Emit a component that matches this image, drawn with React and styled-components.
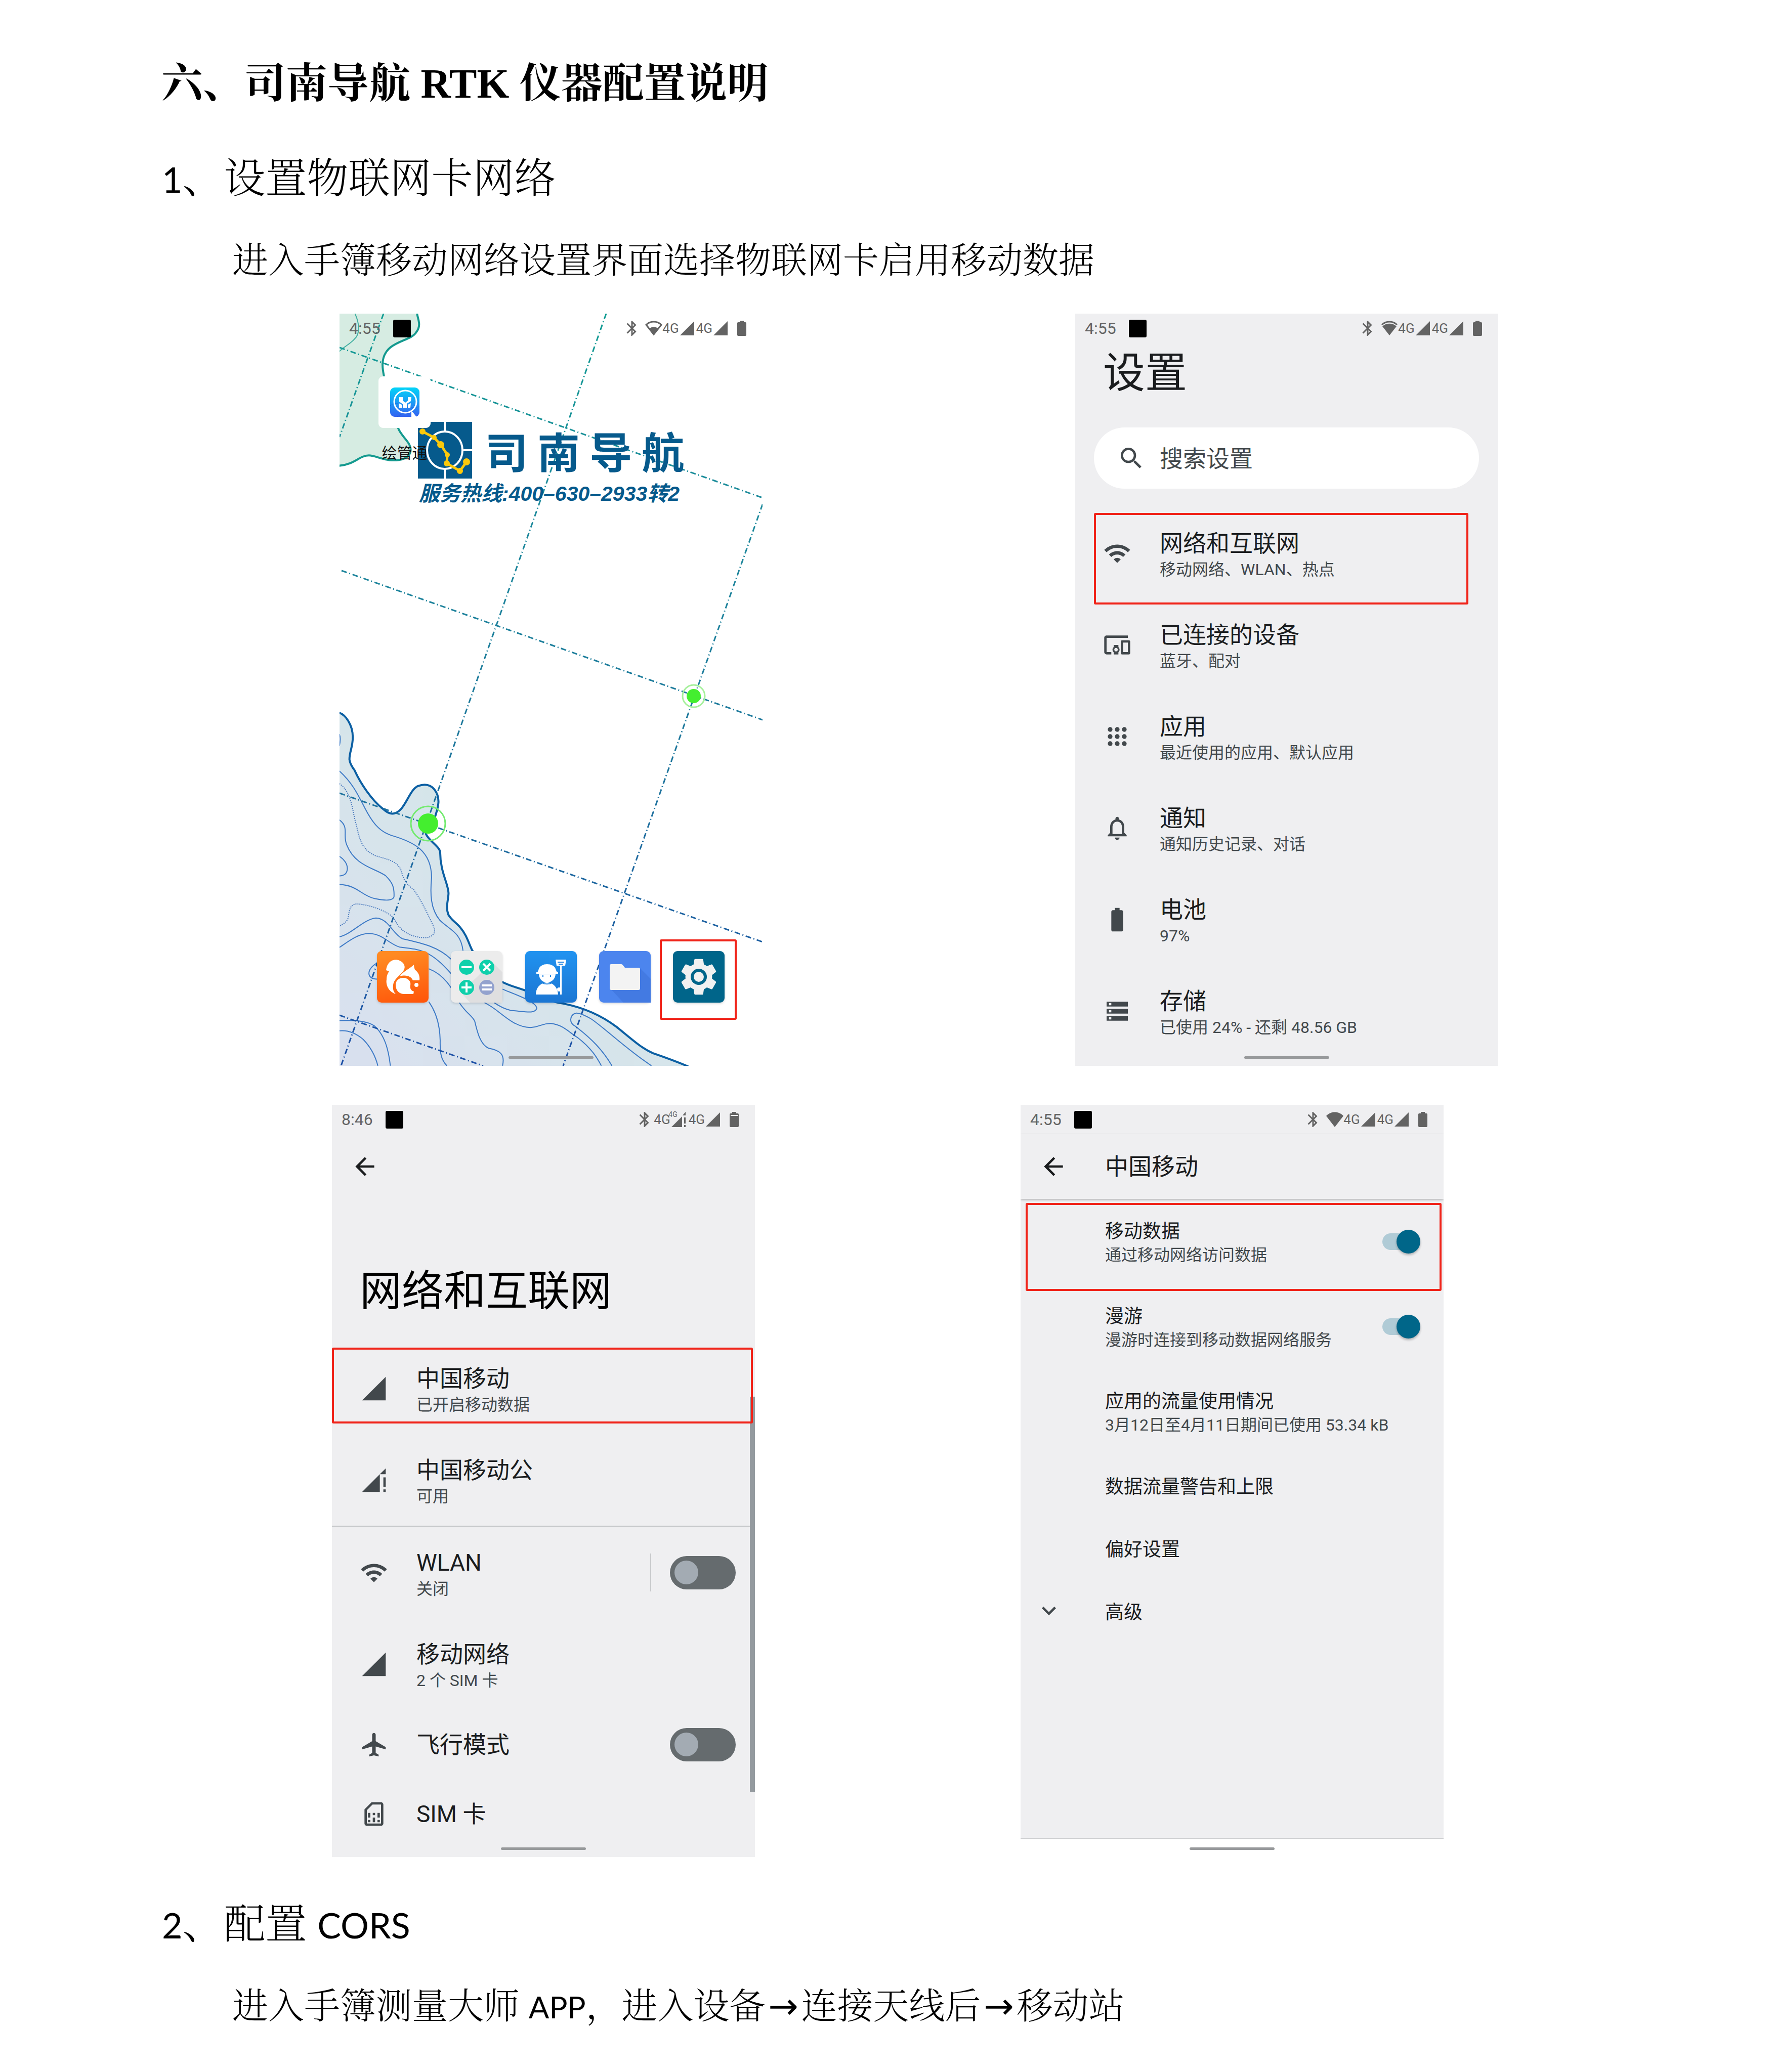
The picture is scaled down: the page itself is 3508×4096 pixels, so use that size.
import React from 'react';
import styled, { createGlobalStyle, css } from 'styled-components';
import {
	MdAirplanemodeActive,
	MdArrowBack,
	MdBatteryFull,
	MdBluetooth,
	MdDevicesOther,
	MdKeyboardArrowDown,
	MdNotificationsNone,
	MdOutlineSimCard,
	MdSearch,
	MdSettings,
	MdSignalCellular4Bar,
	MdWifi,
} from 'react-icons/md';

const songti = `'Liberation Serif', 'Noto Serif CJK SC', 'Noto Sans CJK SC', serif`;
const roboto = `Roboto, 'Noto Sans CJK SC', sans-serif`;

const GlobalStyle = createGlobalStyle`
	* {
		box-sizing: border-box;
	}
	body {
		margin: 0;
		background-color: #fff;
		color: #000;
	}
	h1, h2, h3, p {
		margin: 0;
		padding: 0;
	}
	svg {
		display: block;
		flex-shrink: 0;
	}
`;

/* ---------- status bar ---------- */

const wifiShapes = {
	low: (
		<>
			<path d="M2 8C10 0 24 0 32 8L17 27Z" fill="none" stroke="currentColor" strokeWidth="3" />
			<path d="M8 16C13 11 21 11 26 16L17 28Z" />
		</>
	),
	mid: (
		<>
			<path d="M2 8C10 0 24 0 32 8" fill="none" stroke="currentColor" strokeWidth="3" />
			<path d="M3 11C11 4 23 4 31 11L17 29Z" />
		</>
	),
	full: <path d="M0 8C9 -2 25 -2 34 8L17 30Z" />,
};

const WifiLevel = ({ level }) => (
	<svg width="34" height="30" viewBox="0 0 34 30" fill="currentColor">
		{wifiShapes[level]}
	</svg>
);

const Signal = () => (
	<svg width="28" height="28" viewBox="0 0 28 28" fill="currentColor">
		<path d="M0 28H28V0Z" />
	</svg>
);

const SignalLost = () => (
	<svg width="30" height="30" viewBox="0 0 30 30" fill="currentColor">
		<path d="M0 30H21V9Z" />
		<path d="M22 7L28 0V7Z" />
		<path d="M25 11h3v12h-3zM25 26h3v4h-3z" />
	</svg>
);

const BatteryLevel = ({ notch }) => (
	<svg width="18" height="30" viewBox="0 0 18 30" fill="currentColor">
		<path d="M5 0H13V3H16Q18 3 18 5V28Q18 30 16 30H2Q0 30 0 28V5Q0 3 2 3H5Z" />
		{notch && <path d="M2 7H16" stroke="#efeff1" strokeWidth="2" />}
	</svg>
);

const StatusBar = ({ time, wifi, roaming }) => (
	<Status>
		<Clock>{time}</Clock>
		<Notice />
		<Tray>
			<MdBluetooth size={36} />
			{wifi && <WifiLevel level={wifi} />}
			<TrayGroup>
				<Carrier>
					<Network>4G</Network>
					{roaming ? <SignalLost /> : <Signal />}
					{roaming && <Roaming>4G</Roaming>}
				</Carrier>
				<Carrier>
					<Network>4G</Network>
					<Signal />
				</Carrier>
			</TrayGroup>
			<BatteryBox>
				<BatteryLevel notch={roaming} />
			</BatteryBox>
		</Tray>
	</Status>
);

/* ---------- list icons ---------- */

const AppsIcon = () => (
	<svg width="56" height="56" viewBox="0 0 24 24" fill="currentColor">
		{[6, 12, 18].map(y => [6, 12, 18].map(x => <circle key={`${x}-${y}`} cx={x} cy={y} r="2" />))}
	</svg>
);

const StorageIcon = () => (
	<svg width="56" height="56" viewBox="0 0 24 24" fill="currentColor">
		<path
			fillRule="evenodd"
			d="M3 4h18v4H3zM5 5v2h2V5zM3 10h18v4H3zM5 11v2h2v-2zM3 16h18v4H3zM5 17v2h2v-2z"
		/>
	</svg>
);

const SignalWarnIcon = () => (
	<svg width="56" height="56" viewBox="0 0 24 24" fill="currentColor">
		<path d="M2 22h15V7zM17 7h5V2zM20 9.600h2v8h-2zM20 19.800h2V22h-2z" />
	</svg>
);

/* ---------- shared parts ---------- */

const SettingRow = ({ icon, title, sub, control, children }) => (
	<Row as={control ? 'label' : 'a'} href={control ? undefined : '#'} $single={!sub}>
		<IconSlot>{icon}</IconSlot>
		<RowText>
			<RowTitle>{title}</RowTitle>
			{sub && <RowSub>{sub}</RowSub>}
		</RowText>
		{control}
		{children}
	</Row>
);

const DetailRow = ({ icon, title, sub, control, children }) => (
	<Detail as={control ? 'label' : 'a'} href={control ? undefined : '#'} $single={!sub}>
		<DetailIcon>{icon}</DetailIcon>
		<DetailText>
			<DetailTitle>{title}</DetailTitle>
			{sub && <DetailSub>{sub}</DetailSub>}
		</DetailText>
		{control}
		{children}
	</Detail>
);

/* ---------- home screen ---------- */

const Wallpaper = () => (
	<Backdrop viewBox="0 0 836 1487" preserveAspectRatio="xMidYMid slice" aria-hidden="true">
		<defs>
			<linearGradient id="grid" gradientUnits="userSpaceOnUse" x1="0" y1="0" x2="0" y2="1487">
				<stop offset="0" stopColor="#119c93" />
				<stop offset="0.25" stopColor="#1c8a9b" />
				<stop offset="0.6" stopColor="#1d759c" />
				<stop offset="1" stopColor="#1c4fa6" />
			</linearGradient>
			<linearGradient id="sea" x1="1" y1="0" x2="0" y2="1">
				<stop offset="0.4" stopColor="#d5e6e9" />
				<stop offset="1" stopColor="#d9e0ef" />
			</linearGradient>
		</defs>
		<g transform="translate(-13.4 -11.9) scale(.5501 .2706)">
			<path
				d="M24 44H303C305 80 320 130 300 180C280 250 190 240 180 390C176 430 182 480 186 520L235 880C245 940 280 980 280 1040C278 1105 240 1120 205 1115C170 1105 150 1080 130 1080C95 1080 80 1145 24 1155Z"
				fill="#d6ece2"
			/>
			<path
				d="M303 44C305 80 320 130 300 180C280 250 190 240 180 390C176 430 182 480 186 520L235 880C245 940 280 980 280 1040C278 1105 240 1120 205 1115C170 1105 150 1080 130 1080C95 1080 80 1145 24 1155"
				fill="none"
				stroke="#149a8f"
				strokeWidth="4"
				vectorEffect="non-scaling-stroke"
			/>
			<path
				d="M80 44C95 110 100 190 78 230C60 270 40 285 24 320"
				fill="none"
				stroke="#3fae9f"
				strokeWidth="2"
				vectorEffect="non-scaling-stroke"
			/>
		</g>
		<g transform="translate(-13.4 900.3) scale(.5501 .3833)">
			<path
				d="M10 -300L24 -290C45 -280 72 -230 72 -165C72 -110 60 -90 60 -50C62 -25 75 0 78 5C100 75 140 160 180 205C195 225 205 230 215 230C260 225 270 115 305 88C330 75 350 78 365 105C390 150 378 200 368 245C350 280 330 310 335 335C345 370 385 400 386 430C386 530 415 590 416 640C415 680 405 710 415 750C430 790 455 795 478 860C490 895 495 920 503 940C530 1010 570 1075 612 1100C640 1120 670 1130 692 1142C740 1180 780 1200 830 1210C900 1230 960 1265 1020 1330C1080 1400 1110 1440 1150 1465C1200 1490 1240 1510 1280 1536L10 1540Z"
				fill="url(#sea)"
				stroke="#0b5fa3"
				strokeWidth="4"
				vectorEffect="non-scaling-stroke"
			/>
			{contours.map(d => (
				<path
					key={d}
					d={d}
					fill="none"
					stroke="#3c79c6"
					strokeWidth="2"
					vectorEffect="non-scaling-stroke"
				/>
			))}
			<path
				d="M24 75C70 120 70 220 85 290C95 350 100 410 150 445C190 465 230 470 245 520C255 570 260 590 290 620C320 680 345 760 365 820C370 850 355 870 330 870C270 865 240 830 220 770C190 720 100 690 80 697C60 705 60 730 55 770C50 790 35 800 24 812"
				fill="none"
				stroke="#4a79bd"
				strokeWidth="2"
				strokeDasharray="2 2"
				vectorEffect="non-scaling-stroke"
			/>
		</g>
		<g stroke="url(#grid)" strokeWidth="3" strokeDasharray="11 5 2 5">
			<path d="M87 0L0 244M527 0L3 1487M836 377L442 1487" />
			<path d="M0 67L836 364M4 508L836 803M0 948L836 1242M0 1387L284 1487" />
		</g>
		<circle cx="700" cy="756" r="14" fill="#44ee2f" />
		<circle cx="700" cy="756" r="22" fill="none" stroke="#a5f09b" strokeWidth="3" />
		<circle cx="175" cy="1008" r="20" fill="#44ee2f" />
		<circle cx="175" cy="1008" r="34" fill="none" stroke="#74ea70" strokeWidth="3" />
	</Backdrop>
);

const contours = [
	'M24 -180C28 -165 27 -140 24 -120',
	'M24 10C70 70 90 130 115 200C140 270 165 320 210 342C290 375 355 420 355 560C350 640 350 720 385 780C420 830 460 840 468 937',
	'M24 262C60 300 35 340 50 390C80 500 150 510 190 550C215 585 222 610 220 660C215 680 190 680 150 668C100 650 90 600 24 595',
	'M24 450C40 465 55 490 52 520C50 540 40 550 24 551',
	'M24 865C70 850 110 775 155 768C200 770 215 850 250 875C330 900 380 920 425 980',
	'M24 920C60 885 90 850 130 848C180 850 200 900 240 918C310 930 350 930 425 1055',
	'M345 1030C400 1060 430 1130 455 1205C480 1260 500 1270 510 1300C520 1360 530 1420 560 1440C600 1450 620 1470 610 1530',
	'M160 1000C120 1030 120 1085 160 1083',
	'M345 1200C375 1260 385 1330 386 1400C385 1470 390 1500 410 1530',
	'M545 1205C600 1240 640 1330 710 1333C750 1330 750 1310 785 1312C830 1320 850 1360 880 1385C930 1440 950 1490 965 1530',
	'M610 1135C650 1160 735 1200 733 1235C725 1265 690 1250 640 1245C610 1235 590 1215 580 1205',
	'M1145 1530C1060 1450 980 1340 930 1290C900 1265 880 1255 870 1260C850 1275 850 1310 870 1325C930 1390 970 1450 1003 1530',
	'M24 1297C70 1295 120 1295 150 1325C185 1370 200 1440 207 1530',
	'M24 1350C60 1345 90 1370 110 1395C140 1440 155 1490 162 1530',
];

const stars = [
	[9, 19, 6],
	[32, 31, 5],
	[45, 45, 7],
	[58, 65, 5],
	[57, 82, 6],
	[83, 97, 6],
	[96, 79, 7],
];

const BrandMark = () => (
	<svg width="107" height="112" viewBox="0 0 107 112">
		<rect width="107" height="112" fill="#065a8c" />
		<path d="M53 0V18M53 94V112M90 56H107" stroke="#fff" strokeWidth="4" />
		<ellipse cx="53" cy="56" rx="35" ry="37" fill="none" stroke="#fff" strokeWidth="4" />
		<path
			d={`M${stars.map(([x, y]) => `${x} ${y}`).join('L')}`}
			fill="none"
			stroke="#fcc90b"
			strokeWidth="5"
		/>
		{stars.map(([x, y, r]) => (
			<circle key={x} cx={x} cy={y} r={r} fill="#fcc90b" />
		))}
	</svg>
);

const MapSearchLogo = () => (
	<svg width="58" height="58" viewBox="0 0 58 58">
		<defs>
			<linearGradient id="sky" x1="0" y1="0" x2="0" y2="1">
				<stop offset="0" stopColor="#03d3f8" />
				<stop offset="1" stopColor="#3463f2" />
			</linearGradient>
		</defs>
		<rect width="58" height="58" rx="9" fill="url(#sky)" />
		<path
			d="M0 36Q10 28 20 34T40 40T58 38M14 58Q28 46 44 54"
			fill="none"
			stroke="#2456c8"
			strokeOpacity="0.5"
		/>
		<circle cx="30" cy="28" r="22" fill="none" stroke="#fff" strokeWidth="3" />
		<path d="M42 48L45 49L52 58H42Z" fill="#fff" />
		<g fill="#fff">
			<path d="M18 19H25V26L30 30L35 26V19H42L41 27L33 32V40H25V33L18 28Z" />
			<path d="M17 31L23 34V40H17Z" />
			<path d="M41 31L35 34V40H40Z" />
		</g>
	</svg>
);

const BrowserLogo = () => (
	<svg viewBox="0 0 102 102">
		<defs>
			<linearGradient id="fire" x1="0.6" y1="0" x2="0.8" y2="1">
				<stop offset="0" stopColor="#ff8a22" />
				<stop offset="1" stopColor="#ff560a" />
			</linearGradient>
		</defs>
		<rect width="102" height="102" rx="9" fill="url(#fire)" />
		<g fill="#fff">
			<path d="M18 38C20 20 34 14 45 19C54 23 57 31 53 38C47 48 34 54 32 67C31 76 33 81 37 85C24 81 17 68 19 56C19 49 21 45 24 40C22 39 20 39 18 38Z" />
			<path d="M45 50C52 40 62 37 73 27C73 31 74 34 75 37C82 42 85 49 84 58L71 58C68 51 59 46 45 50Z" />
			<path d="M37 67C37 58 44 53 52 53C61 53 68 60 66 68C65 74 67 78 73 80L72 85H52C42 84 37 76 37 67Z" />
			<circle cx="78" cy="67" r="4" />
		</g>
	</svg>
);

const CalculatorLogo = () => (
	<svg viewBox="0 0 102 102">
		<rect width="102" height="102" rx="9" fill="#ececec" />
		<path d="M82 22L102 42V102H38L20 82Z" fill="#dfdfe0" />
		<circle cx="31" cy="32" r="15" fill="#0fd0ab" />
		<circle cx="71" cy="32" r="15" fill="#0fd0ab" />
		<circle cx="31" cy="72" r="15" fill="#0fd0ab" />
		<circle cx="71" cy="72" r="15" fill="#93a2ce" />
		<path
			d="M21 32H41M64 25L78 39M78 25L64 39M21 72H41M31 62V82M61 68H81M61 76H81"
			stroke="#fff"
			strokeWidth="4"
		/>
	</svg>
);

const SurveyLogo = () => (
	<svg viewBox="0 0 102 102">
		<defs>
			<linearGradient id="blue" x1="0" y1="0" x2="0" y2="1">
				<stop offset="0" stopColor="#2193f0" />
				<stop offset="1" stopColor="#1b76d3" />
			</linearGradient>
		</defs>
		<rect width="102" height="102" rx="9" fill="url(#blue)" />
		<g fill="#fff">
			<path d="M22 42C24 42 25 41 26 38C28 29 36 26 43 26C51 26 59 29 61 38C62 41 63 42 65 42V45H22Z" />
			<path d="M27 46H60C59 56 52 62 43 62C34 62 28 56 27 46Z" />
			<path d="M21 86C21 71 32 62 43 62C54 62 64 71 65 86Z" />
			<path d="M60 17H81L79 29H62Z" />
			<circle cx="67" cy="76" r="4" />
			<rect x="69" y="29" width="3" height="57" />
		</g>
		<path d="M35 48V51M50 48V51M64 22H77M66 26H75" stroke="#2185e0" strokeWidth="2" />
		<path d="M33 63C38 66 48 66 53 63" fill="none" stroke="#2185e0" strokeWidth="2" />
	</svg>
);

const FilesLogo = () => (
	<svg viewBox="0 0 102 102">
		<rect width="102" height="102" rx="9" fill="#4c85ee" />
		<path d="M81 34L102 55V102H48L24 76Z" fill="#437ae2" />
		<path
			d="M24 26H44Q46 26 47 28L51 33H78Q81 33 81 36V74Q81 77 78 77H24Q21 77 21 74V29Q21 26 24 26Z"
			fill="#f3f3f3"
		/>
	</svg>
);

const SettingsLogo = () => (
	<svg viewBox="0 0 102 102">
		<rect width="102" height="102" rx="9" fill="#00658a" />
		<MdSettings x="7" y="7" size={88} color="#f1f1f1" />
		<circle cx="51" cy="51" r="16" fill="#00658a" />
		<circle cx="51" cy="51" r="10" fill="#f1f1f1" />
	</svg>
);

const HomeScreen = () => (
	<Phone $bg="#fff">
		<Wallpaper />
		<StatusBar time="4:55" wifi="low" />
		<Brand>
			<BrandMark />
			<BrandName>司 南 导 航</BrandName>
		</Brand>
		<Hotline>服务热线:400–630–2933转2</Hotline>
		<Shortcut type="button">
			<ShortcutCard>
				<MapSearchLogo />
			</ShortcutCard>
			绘管通
		</Shortcut>
		<Dock>
			<DockApp type="button" aria-label="浏览器">
				<BrowserLogo />
			</DockApp>
			<DockApp type="button" aria-label="计算器">
				<CalculatorLogo />
			</DockApp>
			<DockApp type="button" aria-label="测量大师">
				<SurveyLogo />
			</DockApp>
			<DockApp type="button" aria-label="文件">
				<FilesLogo />
			</DockApp>
			<DockApp type="button" aria-label="设置">
				<SettingsLogo />
				<Highlight $top={-23} $right={-24} $bottom={-34} $left={-26} />
			</DockApp>
		</Dock>
		<Handle />
	</Phone>
);

const SettingsScreen = () => (
	<Phone>
		<StatusBar time="4:55" wifi="mid" />
		<SettingsTitle>设置</SettingsTitle>
		<SearchBox>
			<MdSearch size={56} />
			<SearchInput type="search" placeholder="搜索设置" aria-label="搜索设置" />
		</SearchBox>
		<SettingRow icon={<MdWifi size={56} />} title="网络和互联网" sub="移动网络、WLAN、热点">
			<Highlight $top={11} $right={59} $bottom={-11} $left={37} />
		</SettingRow>
		<SettingRow icon={<MdDevicesOther size={56} />} title="已连接的设备" sub="蓝牙、配对" />
		<SettingRow icon={<AppsIcon />} title="应用" sub="最近使用的应用、默认应用" />
		<SettingRow icon={<MdNotificationsNone size={56} />} title="通知" sub="通知历史记录、对话" />
		<SettingRow icon={<MdBatteryFull size={56} />} title="电池" sub="97%" />
		<SettingRow icon={<StorageIcon />} title="存储" sub="已使用 24% - 还剩 48.56 GB" />
		<Handle />
	</Phone>
);

const NetworkScreen = () => (
	<Phone>
		<StatusBar time="8:46" roaming />
		<TopBar>
			<BackButton type="button" aria-label="返回">
				<MdArrowBack size={56} />
			</BackButton>
		</TopBar>
		<NetworkTitle>网络和互联网</NetworkTitle>
		<SettingRow icon={<MdSignalCellular4Bar size={56} />} title="中国移动" sub="已开启移动数据">
			<Highlight $top={10} $right={4} $bottom={21} $left={0} />
		</SettingRow>
		<SettingRow icon={<SignalWarnIcon />} title="中国移动公" sub="可用" />
		<Divider />
		<SettingRow
			icon={<MdWifi size={56} />}
			title="WLAN"
			sub="关闭"
			control={
				<SplitControl>
					<Switch type="checkbox" role="switch" />
				</SplitControl>
			}
		/>
		<SettingRow icon={<MdSignalCellular4Bar size={56} />} title="移动网络" sub="2 个 SIM 卡" />
		<SettingRow
			icon={<MdAirplanemodeActive size={56} />}
			title="飞行模式"
			control={<Switch type="checkbox" role="switch" />}
		/>
		<SettingRow icon={<MdOutlineSimCard size={56} />} title="SIM 卡" />
		<ScrollThumb />
		<Handle />
	</Phone>
);

const CarrierScreen = () => (
	<Phone>
		<StatusBar time="4:55" wifi="full" />
		<TopBar $raised>
			<BackButton type="button" aria-label="返回">
				<MdArrowBack size={56} />
			</BackButton>
			<BarTitle>中国移动</BarTitle>
		</TopBar>
		<DetailRow
			title="移动数据"
			sub="通过移动网络访问数据"
			control={<SlimSwitch type="checkbox" role="switch" defaultChecked />}
		>
			<Highlight $top={8} $right={4} $bottom={-14} $left={10} />
		</DetailRow>
		<DetailRow
			title="漫游"
			sub="漫游时连接到移动数据网络服务"
			control={<SlimSwitch type="checkbox" role="switch" defaultChecked />}
		/>
		<DetailRow title="应用的流量使用情况" sub="3月12日至4月11日期间已使用 53.34 kB" />
		<DetailRow title="数据流量警告和上限" />
		<DetailRow title="偏好设置" />
		<DetailRow icon={<MdKeyboardArrowDown size={56} />} title="高级" />
		<NavBar />
		<Handle />
	</Phone>
);

const App = () => (
	<Page>
		<GlobalStyle />
		<Title>六、司南导航 RTK 仪器配置说明</Title>
		<Heading>
			<Latin>1</Latin>、设置物联网卡网络
		</Heading>
		<Paragraph>进入手簿移动网络设置界面选择物联网卡启用移动数据</Paragraph>
		<Figures>
			<FigureRow $left="671px" $right="547px">
				<HomeScreen />
				<SettingsScreen />
			</FigureRow>
			<FigureRow $left="656px" $right="655px">
				<NetworkScreen />
				<CarrierScreen />
			</FigureRow>
		</Figures>
		<Heading>
			<Latin>2</Latin>、配置 <Latin>CORS</Latin>
		</Heading>
		<Paragraph>
			进入手簿测量大师 <Latin $small>APP</Latin>，进入设备<Arrow>→</Arrow>连接天线后
			<Arrow>→</Arrow>移动站
		</Paragraph>
	</Page>
);

/* ---------- document ---------- */

const Page = styled.main`
	padding: 106px 0 80px;
	font-family: ${songti};
`;

const Title = styled.h1`
	margin-bottom: 68px;
	padding: 0 319px;
	font-size: 82px;
	line-height: 120px;
	font-weight: bold;
`;

const Heading = styled.h2`
	padding: 0 320px;
	font-size: 82px;
	line-height: 120px;
	font-weight: 300;
`;

const Paragraph = styled.p`
	margin-top: 51px;
	padding: 0 319px 0 459px;
	font-size: 71px;
	line-height: 100px;
	font-weight: 300;
`;

const Latin = styled.span`
	font-family: Lato, sans-serif;
	font-size: ${props => (props.$small ? '60px' : '70px')};
	line-height: 1;
	font-weight: 400;
`;

const Arrow = styled.span`
	display: inline-block;
	width: 1em;
	font-family: 'DejaVu Sans', sans-serif;
	line-height: 1;
	font-weight: 400;
	text-align: center;
`;

const Figures = styled.section`
	display: flex;
	flex-direction: column;
	gap: 77px;
	padding: 55px 0 74px;
`;

const FigureRow = styled.div`
	display: flex;
	justify-content: space-between;
	padding-left: ${props => props.$left};
	padding-right: ${props => props.$right};
`;

/* ---------- phone ---------- */

const Phone = styled.article`
	position: relative;
	flex: 0 1 836px;
	display: flex;
	flex-direction: column;
	min-height: 1487px;
	overflow: hidden;
	background-color: ${props => props.$bg || '#efeff1'};
	font-family: ${roboto};
	color: #1a1c1e;
`;

const Status = styled.header`
	position: relative;
	display: flex;
	align-items: center;
	height: 58px;
	padding: 0 32px 0 19px;
	color: #636363;
`;

const Clock = styled.time`
	font-size: 32px;
	line-height: 40px;
`;

const Notice = styled.span`
	width: 35px;
	height: 35px;
	margin-left: 25px;
	border-radius: 3px;
	background-color: #000;
`;

const Tray = styled.div`
	display: flex;
	align-items: center;
	margin-left: auto;

	> svg + svg {
		margin-left: 8px;
	}
`;

const TrayGroup = styled.span`
	display: flex;
	gap: 4px;
`;

const Carrier = styled.span`
	position: relative;
	display: flex;
	align-items: center;
	gap: 2px;
`;

const Network = styled.span`
	font-size: 26px;
	line-height: 30px;
`;

const Roaming = styled.span`
	position: absolute;
	top: -3px;
	left: 29px;
	font-size: 14px;
	line-height: 16px;
`;

const BatteryBox = styled.span`
	margin-left: 19px;
`;

const Handle = styled.span`
	position: absolute;
	left: 40%;
	right: 40%;
	bottom: 14px;
	height: 5px;
	border-radius: 3px;
	background-color: #97999b;
`;

const Highlight = styled.span`
	position: absolute;
	top: ${props => props.$top}px;
	right: ${props => props.$right}px;
	bottom: ${props => props.$bottom}px;
	left: ${props => props.$left}px;
	z-index: 2;
	border: 4px solid #f0241a;
	border-radius: 3px;
	pointer-events: none;
`;

const IconSlot = styled.span`
	display: flex;
	flex: 0 0 167px;
	padding-left: 55px;
	color: #42484c;
`;

const rowBase = css`
	position: relative;
	display: flex;
	align-items: center;
	padding-right: 38px;
	color: inherit;
	text-decoration: none;
`;

const Row = styled.a`
	${rowBase}
	height: ${props => (props.$single ? '137px' : '181px')};
`;

const RowText = styled.span`
	display: flex;
	flex: 1;
	flex-direction: column;
`;

const RowTitle = styled.span`
	font-size: 46px;
	line-height: 64px;
`;

const RowSub = styled.span`
	font-size: 32px;
	line-height: 40px;
	color: #42484c;
`;

const Detail = styled.a`
	${rowBase}
	height: ${props => (props.$single ? '124px' : '168px')};
	padding-right: 46px;
`;

const DetailIcon = styled(IconSlot)`
	padding-left: 28px;
`;

const DetailText = styled(RowText)`
	padding-top: 7px;
`;

const DetailTitle = styled.span`
	font-size: 37px;
	line-height: 46px;
`;

const DetailSub = styled(RowSub)`
	line-height: 46px;
`;

const Divider = styled.hr`
	width: 100%;
	height: 2px;
	margin: 0;
	border: 0;
	background-color: #c3c5c7;
`;

const Switch = styled.input`
	appearance: none;
	display: flex;
	align-items: center;
	width: 130px;
	height: 66px;
	margin: 0;
	padding: 0 9px;
	border-radius: 33px;
	background-color: #656b6e;

	&::before {
		content: '';
		width: 47px;
		height: 47px;
		border-radius: 50%;
		background-color: #a3abb3;
	}
	&:checked {
		justify-content: flex-end;
	}
`;

const SplitControl = styled.span`
	display: flex;
	align-items: center;
	height: 75px;
	padding-left: 37px;
	border-left: 2px solid #c8cacc;
`;

const SlimSwitch = styled.input`
	appearance: none;
	display: flex;
	align-items: center;
	width: 75px;
	height: 47px;
	margin: 0;
	border-radius: 24px;

	&::before {
		content: '';
		width: 47px;
		height: 47px;
		border-radius: 50%;
		background-color: #8a9196;
	}
	&::after {
		content: '';
		order: -1;
		width: 47px;
		height: 33px;
		margin-right: -19px;
		border-radius: 17px;
		background-color: #b0cbd6;
	}
	&:checked::before {
		background-color: #006689;
		box-shadow: 0 3px 4px rgba(0, 0, 0, 0.25);
		z-index: 1;
	}
`;

/* ---------- settings screens ---------- */

const SettingsTitle = styled.h3`
	margin-bottom: 47px;
	padding-left: 55px;
	font-size: 83px;
	line-height: 120px;
	font-weight: 400;
`;

const SearchBox = styled.div`
	display: flex;
	align-items: center;
	gap: 28px;
	height: 121px;
	margin: 0 38px 37px 37px;
	padding: 0 46px;
	border-radius: 61px;
	background-color: #fff;
	color: #42484c;
`;

const SearchInput = styled.input`
	flex: 1;
	min-width: 0;
	padding: 2px 0 0;
	border: 0;
	outline: 0;
	background: none;
	font-family: inherit;
	font-size: 46px;
	line-height: 64px;
	color: inherit;

	&::placeholder {
		color: #42484c;
		opacity: 1;
	}
`;

const TopBar = styled.div`
	position: relative;
	display: flex;
	align-items: center;
	gap: 74px;
	height: 128px;
	padding-left: 37px;
	${props => props.$raised && 'box-shadow: 0 2px 4px rgba(0, 0, 0, 0.25);'}
`;

const BackButton = styled.button`
	padding: 0;
	border: 0;
	background: none;
	color: inherit;
`;

const BarTitle = styled.h3`
	font-size: 46px;
	line-height: 64px;
	font-weight: 400;
`;

const NetworkTitle = styled.h3`
	margin: 123px 0 41px;
	padding-left: 55px;
	font-size: 83px;
	line-height: 120px;
	font-weight: 400;
	color: #000;
`;

const ScrollThumb = styled.span`
	position: absolute;
	top: 577px;
	right: 0;
	bottom: 129px;
	width: 10px;
	background-color: #949a9f;
`;

const NavBar = styled.footer`
	height: 38px;
	margin-top: auto;
	border-top: 2px solid #cfd0d2;
	background-color: #fff;
`;

/* ---------- home screen ---------- */

const Backdrop = styled.svg`
	position: absolute;
	inset: 0;
	width: 100%;
	height: 100%;
`;

const Brand = styled.div`
	position: relative;
	display: flex;
	align-items: center;
	gap: 26px;
	margin: 156px 0 0 155px;
	color: #065a8c;
`;

const BrandName = styled.strong`
	font-family: 'Noto Sans CJK SC', sans-serif;
	font-size: 84px;
	line-height: 112px;
	font-weight: 700;
`;

const Hotline = styled.p`
	position: relative;
	margin: 6px 0 0 157px;
	font-family: 'Liberation Sans', 'Noto Sans CJK SC', sans-serif;
	font-size: 41px;
	line-height: 48px;
	font-weight: 700;
	font-style: italic;
	color: #065a8c;
`;

const Shortcut = styled.button`
	position: absolute;
	top: 124px;
	left: 77px;
	display: flex;
	flex-direction: column;
	align-items: center;
	gap: 30px;
	padding: 0;
	border: 0;
	background: none;
	font-family: inherit;
	font-size: 30px;
	line-height: 40px;
	color: #111;
`;

const ShortcutCard = styled.span`
	display: flex;
	align-items: center;
	justify-content: center;
	width: 103px;
	height: 102px;
	border-radius: 9px;
	background-color: #fff;
`;

const Dock = styled.nav`
	position: relative;
	display: flex;
	justify-content: space-between;
	margin-top: auto;
	padding: 0 75px 125px 74px;
`;

const DockApp = styled.button`
	position: relative;
	width: 102px;
	height: 102px;
	padding: 0;
	border: 0;
	border-radius: 9px;
	background: none;
	box-shadow: 0 2px 4px rgba(0, 0, 0, 0.15);
`;

export default App;
